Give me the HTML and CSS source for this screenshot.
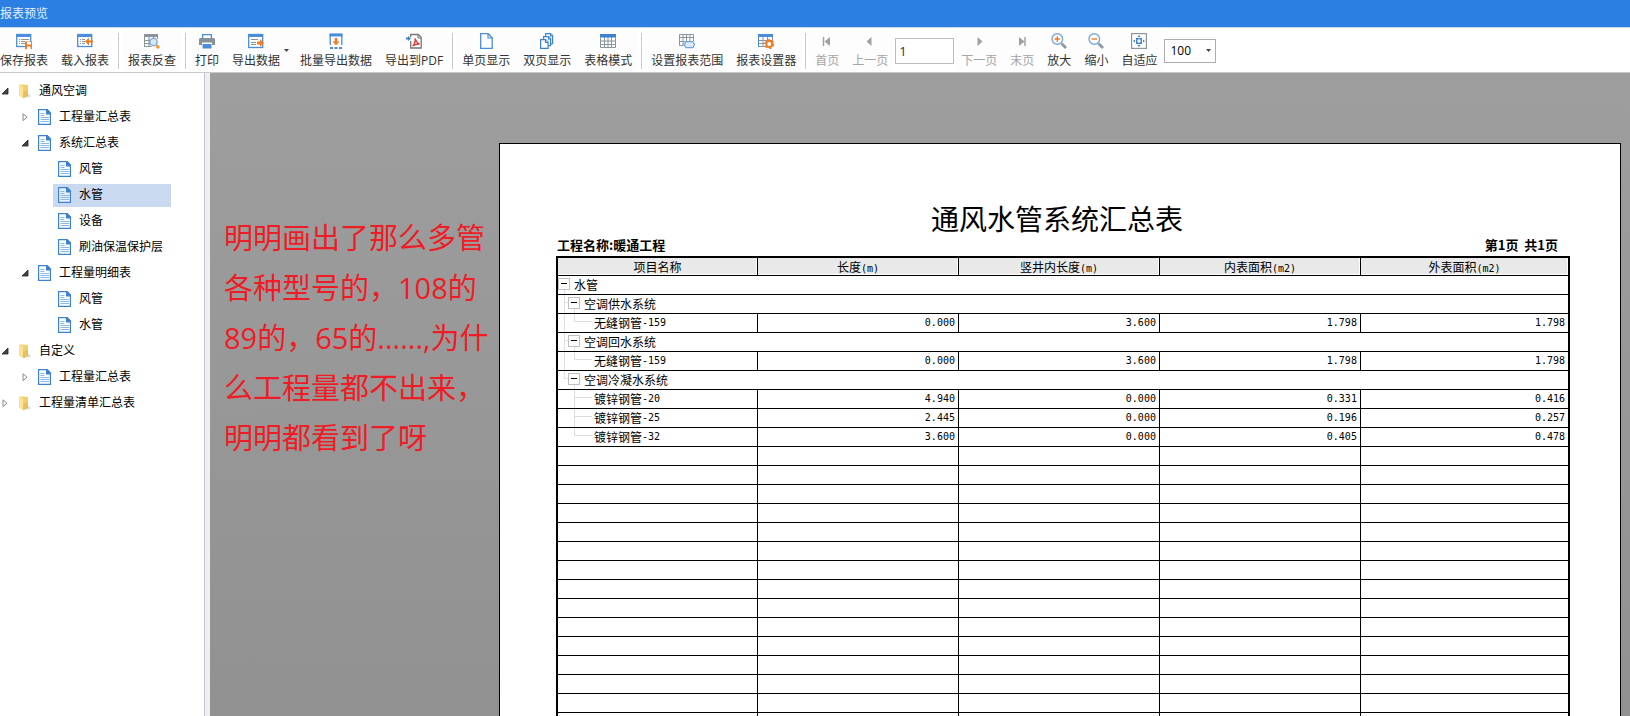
FILE: index.html
```html
<!DOCTYPE html>
<html lang="zh-CN">
<head>
<meta charset="utf-8">
<title>报表预览</title>
<link rel="stylesheet" href="styles.css">
</head>
<body>
<svg class="defs" aria-hidden="true">
  <defs>
    <symbol id="doc" viewBox="0 0 16 16">
      <path d="M.6.6H9L12.400 4v11.400H.6z" fill="#fff" fill-opacity=".6" stroke="#3c82d2" stroke-width="1.200"/>
      <path d="M8 0h1.500L13 4v1.500H8z" fill="#3c82d2"/>
      <path d="M2.500 4.500h4M2.500 6.500h4M2.500 8.500h8.500M2.500 10.500h8.500M2.500 12.500h8.500" stroke="#8db7e8"/>
    </symbol>
    <symbol id="folder" viewBox="0 0 16 16">
      <path d="M1 1.500h4l5 .5V13l-4 2-5-2.500z" fill="#f3cf69"/>
      <path d="M1 1.500l4 1.500V15l-4-2.500z" fill="#fbe29a"/>
      <path d="M5 9l5-2v6.500l-5 1.500z" fill="#e9be5c"/>
      <path d="M10 11l2.500 1v2l-2.500.5z" fill="#ddd"/>
    </symbol>
    <symbol id="open" viewBox="0 0 8 8"><path d="M7 1v6H1z" fill="#444" stroke="#222" stroke-width=".8"/></symbol>
    <symbol id="closed" viewBox="0 0 8 8"><path d="M2 .8v6.800L6 4.200z" fill="#fff" stroke="#888"/></symbol>
    <symbol id="t0" viewBox="0 0 16 18">
      <path d="M6.500 14v4" stroke="#ddd"/><rect x=".5" y="2.500" width="11" height="11" fill="#fff" stroke="#c0c0c0"/><path d="M3 7.500h6" stroke="#000"/>
    </symbol>
    <symbol id="t1" viewBox="0 0 26 18">
      <path d="M6.500 0v18M6.500 7.500h4M16.500 14v4" stroke="#ddd"/><rect x="10.500" y="2.500" width="11" height="11" fill="#fff" stroke="#c0c0c0"/><path d="M13 7.500h6" stroke="#000"/>
    </symbol>
    <symbol id="t1e" viewBox="0 0 26 18">
      <path d="M6.500 0v7.500h4M16.500 14v4" fill="none" stroke="#ddd"/><rect x="10.500" y="2.500" width="11" height="11" fill="#fff" stroke="#c0c0c0"/><path d="M13 7.500h6" stroke="#000"/>
    </symbol>
    <symbol id="t2l" viewBox="0 0 36 18"><path d="M6.500 0v18M16.500 0v7.500H34" fill="none" stroke="#ddd"/></symbol>
    <symbol id="t2" viewBox="0 0 36 18"><path d="M16.500 0v18M16.500 7.500H34" fill="none" stroke="#ddd"/></symbol>
    <symbol id="t2e" viewBox="0 0 36 18"><path d="M16.500 0v7.500H34" fill="none" stroke="#ddd"/></symbol>
  </defs>
</svg>

<header class="titlebar">报表预览</header>

<nav class="toolbar" aria-label="报表工具栏">
  <button class="tool tool-edge" type="button">
    <svg class="icon" viewBox="0 0 16 16"><rect x=".7" y="1.500" width="14" height="12" fill="#fff" stroke="#4a8edb" stroke-width="1.300"/><path d="M.5 2.500h14.500" stroke="#4a8edb" stroke-width="3"/><path d="M3 6.500h1M5 6.500h8M3 8.500h1M5 8.500h4M3 10.500h1M5 10.500h4" stroke="#8a959c"/><path d="M9 8.500h7V16H9z" fill="#f07c26"/><path d="M11 9h4v2.500h-4zM11 13.500h3.500V16H11z" fill="#fff"/></svg>
    <span>保存报表</span></button>
  <button class="tool" type="button">
    <svg class="icon" viewBox="0 0 16 16"><rect x=".7" y="1.500" width="14" height="12" fill="#fff" stroke="#4a8edb" stroke-width="1.300"/><path d="M.5 2.500h14.500" stroke="#4a8edb" stroke-width="3"/><path d="M3 6.500h1M5 6.500h3M3 8.500h1M5 8.500h3M3 10.500h1M5 10.500h3" stroke="#8a959c"/><path d="M8 8.500 12 4.500v3h4v2h-4v3z" fill="#f07c26"/></svg>
    <span>载入报表</span></button>
  <span class="sep"></span>
  <button class="tool" type="button">
    <svg class="icon" viewBox="0 0 16 16"><path d="M0 1h14v3H0z" fill="#8a959c"/><path d="M.5 2v11.500h7M.5 7.500h7M.5 10.500h6M5 2v11M9.500 2v4M13.500 2v4" fill="none" stroke="#8a959c" stroke-width="1.200"/><circle cx="9.500" cy="9" r="3.600" fill="#dce9f8" stroke="#7fa6dc" stroke-width="1.400"/><path d="m12.500 12.500 2.500 2.500" stroke="#f39a1e" stroke-width="3"/></svg>
    <span>报表反查</span></button>
  <span class="sep"></span>
  <button class="tool" type="button">
    <svg class="icon" viewBox="0 0 16 16"><path d="M3.600 5V1.600h8.800V5" fill="#fff" stroke="#4a8edb" stroke-width="1.300"/><path d="M1 5h14l1 1v6h-3V9.500H3V12H0V6z" fill="#87929a"/><path d="M3.500 11h9v4.500h-9z" fill="#4a8edb"/></svg>
    <span>打印</span></button>
  <button class="tool tool-menu" type="button">
    <svg class="icon" viewBox="0 0 16 16"><rect x=".7" y="1.500" width="14" height="13" fill="#fff" stroke="#4a8edb" stroke-width="1.300"/><path d="M.5 2.500h14.500" stroke="#4a8edb" stroke-width="3"/><path d="M3 6.500h7M3 9.500h5M3 11.500h5" stroke="#8a959c"/><path d="M16 10 12 6v2.500H9v3h3V14z" fill="#f07c26"/></svg>
    <span>导出数据</span>
    <svg class="caret" viewBox="0 0 5 3"><path d="M0 0h5L2.500 3z" fill="#444"/></svg></button>
  <button class="tool" type="button">
    <svg class="icon" viewBox="0 0 16 16"><path d="M2.200 12V1.500h11.600V12" fill="#fff" stroke="#4a8edb" stroke-width="1.300"/><path d="M1.500 2h13" stroke="#4a8edb" stroke-width="3"/><path d="M2 15h3M6.500 15h3M11 15h3" stroke="#4a8edb" stroke-width="2"/><path d="M8 12.500 4.500 8.500h2.200V5h2.600v3.500h2.200z" fill="#f07c26"/></svg>
    <span>批量导出数据</span></button>
  <button class="tool" type="button">
    <svg class="icon" viewBox="0 0 16 16"><path d="M4.700 4V1.500h7.500l3 3V15H4.700V8" fill="#fff" stroke="#777" stroke-width="1.300"/><path d="M12 1.500V5h3.200" fill="none" stroke="#777"/><path d="M0 4.500h2V3l3 2.500L2 8V6.500H0z" fill="#3c82d2"/><path d="M9 5.500c1 3 2 4.500 4.500 5.500-3 0-5 .3-7 2 2-1.500 3-4 2.500-7.500z" fill="none" stroke="#e23b3b" stroke-width="1.300"/></svg>
    <span>导出到PDF</span></button>
  <span class="sep"></span>
  <button class="tool" type="button">
    <svg class="icon" viewBox="0 0 16 16"><path d="M2.700.7h7.500l4 4v10.600H2.700z" fill="#fff" stroke="#4a8edb" stroke-width="1.300"/><path d="M10 .7V5h4.200" fill="none" stroke="#4a8edb" stroke-width="1.200"/></svg>
    <span>单页显示</span></button>
  <button class="tool" type="button">
    <svg class="icon" viewBox="0 0 16 16"><g fill="#fff" stroke="#3c82d2" stroke-width="1.200"><path d="M6.600.6h5l2 2v8h-7z"/><path d="M11.500.6v2.200h2.200" /><path d="M4.600 3.600h5l2 2v7h-7z"/><path d="M9.500 3.600v2.200h2.200"/><path d="M1.600 6.600h5l2.500 2.500v6.300H1.600z"/><path d="M6.500 6.600v2.700h2.700"/></g></svg>
    <span>双页显示</span></button>
  <button class="tool" type="button">
    <svg class="icon" viewBox="0 0 16 16"><path d="M.5 4.500v10h15v-10M.5 8h15M.5 11.500h15M4.500 4v10.500M8 4v10.500M11.500 4v10.500" fill="none" stroke="#8a959c"/><path d="M0 1h16v3.500H0z" fill="#3c82d2"/></svg>
    <span>表格模式</span></button>
  <span class="sep"></span>
  <button class="tool" type="button">
    <svg class="icon" viewBox="0 0 16 16"><path d="M.5 12.500v-11h14V8M.5 4.500h14M.5 8.500h6M.5 12.500h4M4 1.500v11M7.500 1.500V8M11 1.500V8" fill="none" stroke="#8a959c"/><path d="M7 8.600h7l1.400 3-1.400 3H7l-2-3z" fill="#dce9f8" stroke="#6fa3e0" stroke-width="1.200"/></svg>
    <span>设置报表范围</span></button>
  <button class="tool" type="button">
    <svg class="icon" viewBox="0 0 16 16"><path d="M.5 4v9.500h7M.5 7.500h14M.5 10.500h7M5 4v9.500M9.500 4v4M14.500 4v4" fill="none" stroke="#8a959c"/><path d="M0 1h15v3H0zM0 3h1v11H0z" fill="#4a8edb"/><circle cx="11.300" cy="11" r="3" fill="#fff" stroke="#f07c26" stroke-width="2"/><circle cx="11.300" cy="11" r="4.200" fill="none" stroke="#f07c26" stroke-width="1.600" stroke-dasharray="2.200"/></svg>
    <span>报表设置器</span></button>
  <span class="sep"></span>
  <button class="tool" type="button" disabled>
    <svg class="icon" viewBox="0 0 16 16"><path d="M4.500 4v9" stroke="#a0a0a0" stroke-width="1.500"/><path d="M11 4v9L5.500 8.500z" fill="#a0a0a0"/></svg>
    <span>首页</span></button>
  <button class="tool" type="button" disabled>
    <svg class="icon" viewBox="0 0 16 16"><path d="M9.500 4v9L4.500 8.500z" fill="#a0a0a0"/></svg>
    <span>上一页</span></button>
  <input class="page-no" type="text" value="1" aria-label="页码">
  <button class="tool" type="button" disabled>
    <svg class="icon" viewBox="0 0 16 16"><path d="M6.500 4v9l5-4.500z" fill="#a0a0a0"/></svg>
    <span>下一页</span></button>
  <button class="tool" type="button" disabled>
    <svg class="icon" viewBox="0 0 16 16"><path d="M11 4v9" stroke="#a0a0a0" stroke-width="1.500"/><path d="M5 4v9l5.500-4.500z" fill="#a0a0a0"/></svg>
    <span>末页</span></button>
  <button class="tool" type="button">
    <svg class="icon" viewBox="0 0 16 16"><path d="m10.500 10.500 4.500 4.500" stroke="#8e99a2" stroke-width="2.800"/><circle cx="6.300" cy="6" r="5.300" fill="#fff" stroke="#78a6de" stroke-width="1.400"/><path d="M3.500 6h5.600M6.300 3.200v5.600" stroke="#f07c26" stroke-width="1.400"/></svg>
    <span>放大</span></button>
  <button class="tool" type="button">
    <svg class="icon" viewBox="0 0 16 16"><path d="m10.500 10.500 4.500 4.500" stroke="#8e99a2" stroke-width="2.800"/><circle cx="6.300" cy="6" r="5.300" fill="#fff" stroke="#78a6de" stroke-width="1.400"/><path d="M3.500 6h5.600" stroke="#f07c26" stroke-width="1.400"/></svg>
    <span>缩小</span></button>
  <button class="tool" type="button">
    <svg class="icon" viewBox="0 0 16 16"><rect x=".6" y=".6" width="14.800" height="14.800" fill="#fff" stroke="#8a959c" stroke-width="1.200"/><rect x="5.700" y="5.700" width="4.600" height="4.600" fill="none" stroke="#3c82d2" stroke-width="1.400"/><path d="M8 2l1.500 2h-3zM8 14l1.500-2h-3zM2 8l2-1.500v3zM14 8l-2-1.500v3z" fill="#3c82d2"/></svg>
    <span>自适应</span></button>
  <div class="zoom">
    <select class="zoom-select" aria-label="缩放比例"><option>100</option><option>150</option></select>
    <svg class="zoom-caret" viewBox="0 0 5 3"><path d="M0 0h5L2.500 3z" fill="#444"/></svg>
  </div>
</nav>

<div class="body">
  <aside class="side">
    <ul class="tree">
      <li>
        <div class="node"><svg class="toggle"><use href="#open"/></svg><a class="label" href="#"><svg class="icon"><use href="#folder"/></svg>通风空调</a></div>
        <ul>
          <li><div class="node"><svg class="toggle"><use href="#closed"/></svg><a class="label" href="#"><svg class="icon"><use href="#doc"/></svg>工程量汇总表</a></div></li>
          <li>
            <div class="node"><svg class="toggle"><use href="#open"/></svg><a class="label" href="#"><svg class="icon"><use href="#doc"/></svg>系统汇总表</a></div>
            <ul>
              <li><div class="node"><span class="toggle"></span><a class="label" href="#"><svg class="icon"><use href="#doc"/></svg>风管</a></div></li>
              <li><div class="node"><span class="toggle"></span><a class="label selected" href="#"><svg class="icon"><use href="#doc"/></svg>水管</a></div></li>
              <li><div class="node"><span class="toggle"></span><a class="label" href="#"><svg class="icon"><use href="#doc"/></svg>设备</a></div></li>
              <li><div class="node"><span class="toggle"></span><a class="label" href="#"><svg class="icon"><use href="#doc"/></svg>刷油保温保护层</a></div></li>
            </ul>
          </li>
          <li>
            <div class="node"><svg class="toggle"><use href="#open"/></svg><a class="label" href="#"><svg class="icon"><use href="#doc"/></svg>工程量明细表</a></div>
            <ul>
              <li><div class="node"><span class="toggle"></span><a class="label" href="#"><svg class="icon"><use href="#doc"/></svg>风管</a></div></li>
              <li><div class="node"><span class="toggle"></span><a class="label" href="#"><svg class="icon"><use href="#doc"/></svg>水管</a></div></li>
            </ul>
          </li>
        </ul>
      </li>
      <li>
        <div class="node"><svg class="toggle"><use href="#open"/></svg><a class="label" href="#"><svg class="icon"><use href="#folder"/></svg>自定义</a></div>
        <ul>
          <li><div class="node"><svg class="toggle"><use href="#closed"/></svg><a class="label" href="#"><svg class="icon"><use href="#doc"/></svg>工程量汇总表</a></div></li>
        </ul>
      </li>
      <li><div class="node"><svg class="toggle"><use href="#closed"/></svg><a class="label" href="#"><svg class="icon"><use href="#folder"/></svg>工程量清单汇总表</a></div></li>
    </ul>
  </aside>

  <main class="canvas">
    <p class="note">明明画出了那么多管<br>各种型号的，108的<br>89的，65的......,为什<br>么工程量都不出来，<br>明明都看到了呀</p>
    <section class="sheet">
      <h1 class="sheet-title">通风水管系统汇总表</h1>
      <div class="sheet-meta"><span>工程名称:暖通工程</span><span>第1页&nbsp; 共1页</span></div>
      <table class="report">
        <colgroup><col class="c-name"><col class="c-val"><col class="c-val"><col class="c-val"><col></colgroup>
        <thead>
          <tr><th>项目名称</th><th>长度<span class="num">(m)</span></th><th>竖井内长度<span class="num">(m)</span></th><th>内表面积<span class="num">(m2)</span></th><th>外表面积<span class="num">(m2)</span></th></tr>
        </thead>
        <tbody>
          <tr><td colspan="5"><div class="cell"><svg class="w0"><use href="#t0"/></svg>水管</div></td></tr>
          <tr><td colspan="5"><div class="cell"><svg class="w1"><use href="#t1"/></svg>空调供水系统</div></td></tr>
          <tr><td><div class="cell"><svg class="w2"><use href="#t2l"/></svg>无缝钢管<span class="num">-159</span></div></td><td class="num">0.000</td><td class="num">3.600</td><td class="num">1.798</td><td class="num">1.798</td></tr>
          <tr><td colspan="5"><div class="cell"><svg class="w1"><use href="#t1"/></svg>空调回水系统</div></td></tr>
          <tr><td><div class="cell"><svg class="w2"><use href="#t2l"/></svg>无缝钢管<span class="num">-159</span></div></td><td class="num">0.000</td><td class="num">3.600</td><td class="num">1.798</td><td class="num">1.798</td></tr>
          <tr><td colspan="5"><div class="cell"><svg class="w1"><use href="#t1e"/></svg>空调冷凝水系统</div></td></tr>
          <tr><td><div class="cell"><svg class="w2"><use href="#t2"/></svg>镀锌钢管<span class="num">-20</span></div></td><td class="num">4.940</td><td class="num">0.000</td><td class="num">0.331</td><td class="num">0.416</td></tr>
          <tr><td><div class="cell"><svg class="w2"><use href="#t2"/></svg>镀锌钢管<span class="num">-25</span></div></td><td class="num">2.445</td><td class="num">0.000</td><td class="num">0.196</td><td class="num">0.257</td></tr>
          <tr><td><div class="cell"><svg class="w2"><use href="#t2e"/></svg>镀锌钢管<span class="num">-32</span></div></td><td class="num">3.600</td><td class="num">0.000</td><td class="num">0.405</td><td class="num">0.478</td></tr>
          <tr><td></td><td></td><td></td><td></td><td></td></tr>
          <tr><td></td><td></td><td></td><td></td><td></td></tr>
          <tr><td></td><td></td><td></td><td></td><td></td></tr>
          <tr><td></td><td></td><td></td><td></td><td></td></tr>
          <tr><td></td><td></td><td></td><td></td><td></td></tr>
          <tr><td></td><td></td><td></td><td></td><td></td></tr>
          <tr><td></td><td></td><td></td><td></td><td></td></tr>
          <tr><td></td><td></td><td></td><td></td><td></td></tr>
          <tr><td></td><td></td><td></td><td></td><td></td></tr>
          <tr><td></td><td></td><td></td><td></td><td></td></tr>
          <tr><td></td><td></td><td></td><td></td><td></td></tr>
          <tr><td></td><td></td><td></td><td></td><td></td></tr>
          <tr><td></td><td></td><td></td><td></td><td></td></tr>
          <tr><td></td><td></td><td></td><td></td><td></td></tr>
          <tr><td></td><td></td><td></td><td></td><td></td></tr>
          <tr><td></td><td></td><td></td><td></td><td></td></tr>
        </tbody>
      </table>
    </section>
  </main>
</div>
</body>
</html>
```
FILE: styles.css
```css
* { box-sizing: border-box; }

body {
  margin: 0;
  height: 100vh;
  display: flex;
  flex-direction: column;
  overflow: hidden;
  background: #fff;
  color: #000;
  font: 12px/18px "Open Sans", "Noto Sans CJK SC", sans-serif;
}

ul { list-style: none; margin: 0; padding: 0; }
svg { display: block; flex: none; }
.defs { position: absolute; width: 0; height: 0; }
.icon { width: 16px; height: 16px; }

.titlebar {
  flex: none;
  height: 28px;
  line-height: 27px;
  background: #2b7fe3;
  border-bottom: 1px solid #c9d6e6;
  color: #e4effc;
}

/* Toolbar */
.toolbar {
  flex: none;
  display: flex;
  align-items: center;
  gap: 1px;
  padding: 2px 0 1px;
  border-bottom: 1px solid #c8cacf;
}
.tool {
  position: relative;
  flex: none;
  display: flex;
  flex-direction: column;
  align-items: center;
  gap: 3px;
  padding: 3px 6px 1px;
  border: 0;
  border-radius: 2px;
  background: #fdfdfd;
  color: #333;
  font: inherit;
  white-space: nowrap;
}
.tool:disabled { color: #a5a5a5; }
.tool-edge { padding-left: 0; }
.tool-menu { padding-right: 13px; }
.caret { position: absolute; right: 4px; top: 19px; width: 5px; height: 3px; }
.sep { flex: none; width: 1px; height: 36px; margin: 0 2px; background: #c8c8c8; }
.page-no {
  width: 59px;
  height: 26px;
  padding: 0 3px;
  border: 1px solid #bcbcbc;
  color: #333;
  font: inherit;
  font-size: 13px;
}
.zoom { position: relative; }
.zoom-select {
  appearance: none;
  display: block;
  width: 52px;
  height: 24px;
  padding: 0 5px;
  border: 1px solid #adadad;
  border-radius: 0;
  background: #fff;
  color: #000;
  font: inherit;
}
.zoom-caret { position: absolute; right: 5px; top: 10px; width: 5px; height: 3px; pointer-events: none; }

/* Report tree */
.body { flex: 1; min-height: 0; display: flex; }
.side {
  flex: none;
  width: 210px;
  padding: 5px 0 0;
  border-right: 5px solid #f0f0f2;
  box-shadow: inset -1px 0 #c4c4cc;
}
.tree ul { padding-left: 20px; }
.node { display: flex; align-items: center; height: 26px; padding-right: 34px; }
.toggle { flex: none; width: 8px; height: 8px; margin: 0 4px 0 1px; }
.label {
  flex: 1;
  display: flex;
  align-items: center;
  gap: 5px;
  height: 23px;
  padding-left: 5px;
  color: #000;
  text-decoration: none;
  white-space: nowrap;
}
.selected { background: #c9d9ef; }

/* Preview area */
.canvas {
  flex: 1;
  min-width: 0;
  display: flex;
  align-items: flex-start;
  overflow: hidden;
  padding-right: 9px;
  background: linear-gradient(#9e9e9e, #919191);
}
.note {
  flex: none;
  width: 289px;
  margin: 0;
  padding: 140px 0 0 14px;
  color: #ee1c25;
  font-size: 29px;
  line-height: 50px;
  white-space: nowrap;
}
.sheet {
  flex: 1;
  min-width: 0;
  margin-top: 70px;
  padding: 58px 50px 60px 56px;
  border: 1px solid #000;
  background: #fff;
  font-family: "Noto Sans CJK SC", sans-serif;
}
.sheet-title {
  margin: 0;
  padding-right: 12px;
  font-size: 28px;
  line-height: 32px;
  font-weight: 400;
  text-align: center;
}
.sheet-meta {
  display: flex;
  justify-content: space-between;
  padding: 0 12px 1px 1px;
  font-size: 13px;
  line-height: 21px;
  font-weight: 700;
}
.report {
  width: 100%;
  table-layout: fixed;
  border: 2px solid #000;
  border-spacing: 0;
}
.c-name { width: 19.8%; }
.c-val { width: 19.9%; }
.report th, .report td {
  height: 19px;
  padding: 0;
  border: solid #000;
  border-width: 0 1px 1px 0;
  line-height: 18px;
  white-space: nowrap;
}
.report th {
  height: 18px;
  background: #e9e9e9;
  box-shadow: inset -1px -1px #fff;
  font-weight: 400;
  line-height: 16px;
}
.report .num { font-family: "DejaVu Sans Mono", monospace; font-size: 10px; }
.report th .num { line-height: 10px; }
.report th:last-child, .report td:last-child { border-right: 0; }
.report td.num { padding-right: 3px; text-align: right; }
.cell { display: flex; align-items: center; height: 18px; }
.w0 { width: 16px; height: 18px; }
.w1 { width: 26px; height: 18px; }
.w2 { width: 36px; height: 18px; }
```
